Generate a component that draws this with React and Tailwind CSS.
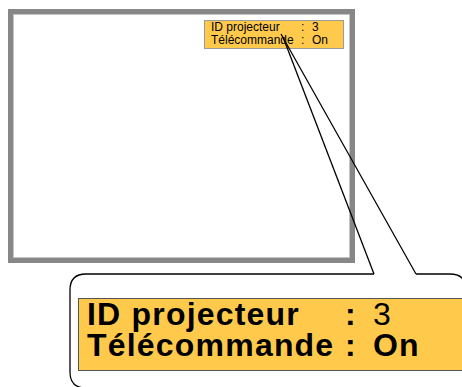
import React from 'react';

const font = { fontFamily: '"Liberation Sans", Arial, sans-serif' };

const rows = [
  { label: 'ID projecteur', value: '3', valueClass: 'font-normal' },
  { label: 'Télécommande', value: 'On', valueClass: 'font-bold' },
];

const SmallPanel = () => (
  <div className="absolute left-[204px] top-[20px] w-[140px] h-[29px] bg-[#FFCA4B] border border-[#9c9c9c] pl-[6px]">
    <div className="grid grid-cols-[90px_11px_auto] text-[12px] leading-[12.5px] text-black">
      {rows.map((r) => (
        <React.Fragment key={r.label}>
          <span>{r.label}</span>
          <span>:</span>
          <span>{r.value}</span>
        </React.Fragment>
      ))}
    </div>
  </div>
);

const BigPanel = () => (
  <div className="absolute left-[78px] top-[298px] right-[-10px] h-[73px] bg-[#FFCA4B] border-t border-b border-l border-[#555] pl-[8px]">
    <div className="grid grid-cols-[258px_28px_auto] text-[32px] leading-[31px] font-bold tracking-[1.2px] text-black">
      {rows.map((r) => (
        <React.Fragment key={r.label}>
          <span>{r.label}</span>
          <span>:</span>
          <span className={r.valueClass}>{r.value}</span>
        </React.Fragment>
      ))}
    </div>
  </div>
);

export default function App() {
  return (
    <div className="relative w-[462px] h-[387px] bg-white overflow-hidden" style={font}>
      {/* screen frame */}
      <div className="absolute left-[8px] top-[9px] w-[347px] h-[254px] border-[5px] border-[#878787]">
        <div className="w-full h-full border border-[#c4c4c4] bg-white"></div>
      </div>

      <SmallPanel />
      <BigPanel />

      {/* callout outline and pointer */}
      <svg className="absolute inset-0 pointer-events-none" width="462" height="387" viewBox="0 0 462 387">
        <path
          d="M374 274 L86 274 Q70 274 70 290 L70 372 Q70 388 86 388"
          fill="none"
          stroke="#000"
          strokeWidth="1.3"
        />
        <path
          d="M416 274 L450 274 Q466 274 466 290"
          fill="none"
          stroke="#000"
          strokeWidth="1.3"
        />
        <path d="M283 37 L374 274" fill="none" stroke="#000" strokeWidth="1.3" />
        <path d="M281 34 L416 274" fill="none" stroke="#000" strokeWidth="1.3" />
      </svg>
    </div>
  );
}
